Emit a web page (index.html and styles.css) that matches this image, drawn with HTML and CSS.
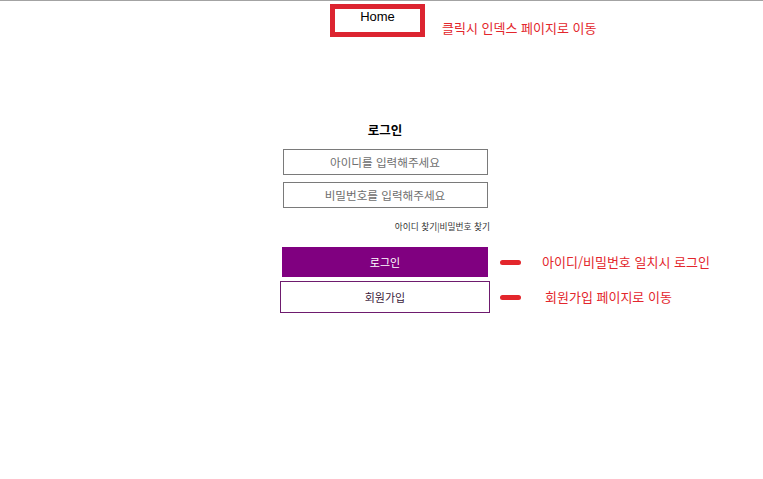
FILE: index.html
```
<!DOCTYPE html>
<html lang="ko">
<head>
<meta charset="utf-8">
<title>로그인</title>
<link rel="stylesheet" href="styles.css">
</head>
<body>
<header class="top">
  <a class="home" href="#">Home</a>
  <span class="note note-home">클릭시 인덱스 페이지로 이동</span>
</header>
<main class="login">
  <h1 class="title">로그인</h1>
  <input class="field" type="text" placeholder="아이디를 입력해주세요">
  <input class="field field-pw" type="password" placeholder="비밀번호를 입력해주세요">
  <div class="find">아이디 찾기|비밀번호 찾기</div>
  <div class="row row-login">
    <button class="btn btn-login">로그인</button>
    <span class="dash"></span>
    <span class="note">아이디/비밀번호 일치시 로그인</span>
  </div>
  <div class="row row-join">
    <button class="btn btn-join">회원가입</button>
    <span class="dash"></span>
    <span class="note note-join">회원가입 페이지로 이동</span>
  </div>
</main>
</body>
</html>
```
FILE: styles.css
```
* { box-sizing: border-box; }
html, body { margin: 0; padding: 0; background: #fff; }
body {
  border-top: 1px solid #a3a3a3;
  font-family: "Noto Sans CJK KR", "Noto Sans", sans-serif;
  color: #000;
}
.top {
  display: flex;
  align-items: flex-start;
  padding-left: 330px;
  padding-top: 3px;
}
.home {
  display: block;
  width: 95px;
  height: 33px;
  border: 5px solid #dc2430;
  text-align: center;
  font-family: "Liberation Sans", Arial, sans-serif;
  font-size: 13px;
  line-height: 15px;
  padding-top: 0;
  color: #000;
  text-decoration: none;
}
.note {
  color: #e3262c;
  font-size: 13px;
  line-height: 16px;
  white-space: nowrap;
}
.note-home {
  margin-left: 17px;
  margin-top: 16px;
}
.login {
  width: 210px;
  margin-left: 280px;
  margin-top: 84px;
  display: flex;
  flex-direction: column;
  align-items: center;
}
.title {
  margin: 0;
  font-size: 12.5px;
  font-weight: bold;
  line-height: 18px;
}
.field {
  display: block;
  width: 205px;
  height: 26px;
  margin-top: 10px;
  border: 1px solid #7a7a7a;
  padding: 0;
  text-align: center;
  font-family: "Noto Sans CJK KR", sans-serif;
  font-size: 11.6px;
  outline: none;
}
.field::placeholder { color: #6e6e6e; }
.field-pw { margin-top: 7px; }
.find {
  align-self: flex-end;
  margin-top: 13px;
  font-size: 8.7px;
  line-height: 12px;
  color: #333;
}
.row {
  display: flex;
  align-items: center;
  width: 210px;
}
.row-login { margin-top: 14px; }
.row-join { margin-top: 4px; }
.btn {
  flex: none;
  font-family: "Noto Sans CJK KR", sans-serif;
  font-size: 11px;
  cursor: pointer;
}
.btn-login {
  width: 206px;
  height: 30px;
  margin-left: 2px;
  margin-right: 2px;
  background: #800080;
  color: #fff;
  border: none;
}
.btn-join {
  width: 210px;
  height: 32px;
  background: #fff;
  color: #3a1a3a;
  border: 1px solid #6e1b6e;
}
.dash {
  flex: none;
  width: 21px;
  height: 5px;
  border-radius: 3px;
  background: #e3262c;
  margin-left: 10px;
  margin-right: 21px;
}
.row-join .dash { margin-right: 24px; }
```
